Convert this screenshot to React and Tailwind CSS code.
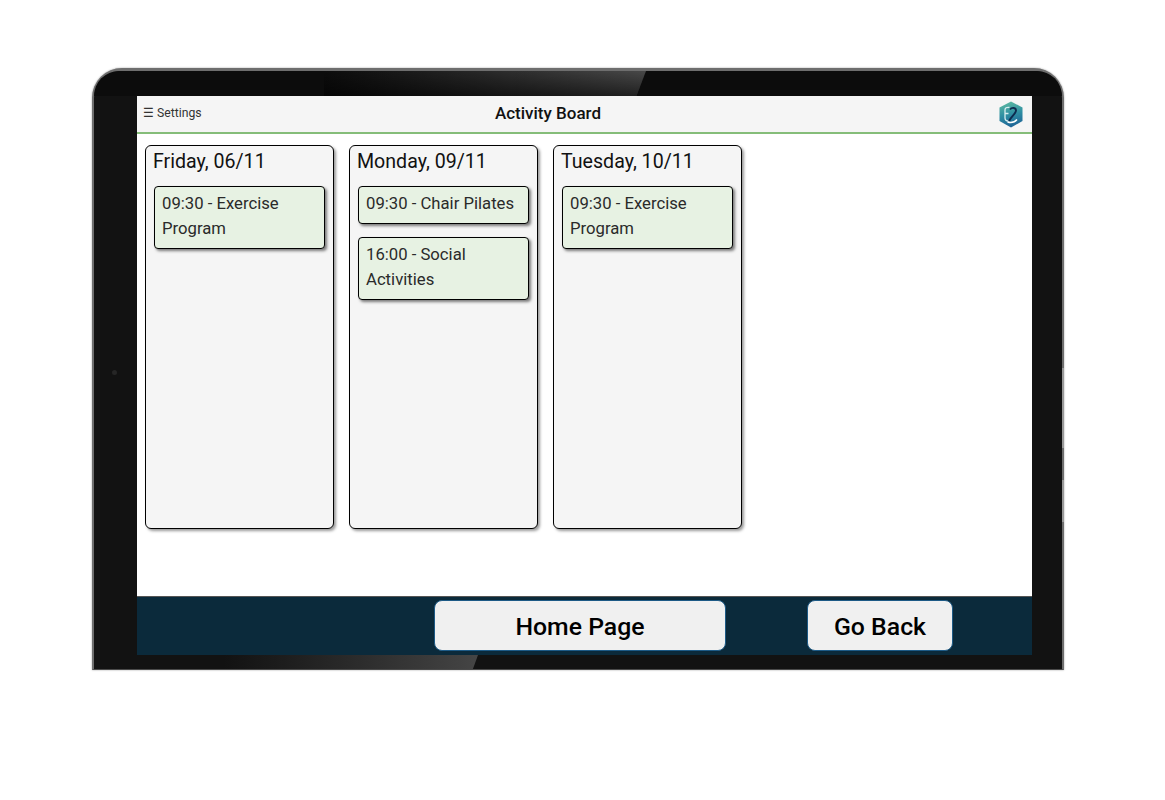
const days = [
  { title: 'Friday, 06/11', items: [['09:30 - Exercise', 'Program']] },
  { title: 'Monday, 09/11', items: [['09:30 - Chair Pilates'], ['16:00 - Social', 'Activities']] },
  { title: 'Tuesday, 10/11', items: [['09:30 - Exercise', 'Program']] },
];

function Logo() {
  return (
    <svg width="26" height="27" viewBox="0 0 26 27" className="block">
      <defs>
        <linearGradient id="hex" x1="0.3" y1="0" x2="0.5" y2="1">
          <stop offset="0" stopColor="#5cb8a0" />
          <stop offset="0.5" stopColor="#2f8fa3" />
          <stop offset="1" stopColor="#1d6296" />
        </linearGradient>
      </defs>
      <polygon points="13,0.5 24.5,6.5 24.5,20 13,26.5 1.500,20 1.500,6.500" fill="url(#hex)" />
      {/* E curve, light */}
      <path d="M11.500 6.500c-3-.5-4.500.5-4.500 2.500v8c0 2 1.500 3 3.500 3M7 12.500h3.500" fill="none" stroke="#d8eef0" strokeWidth="1.300" />
      {/* 2 curve, navy */}
      <path d="M12 8.500c2-2.500 6-2 6 1 0 3-5 6-7 10.500" fill="none" stroke="#0d2b4e" strokeWidth="1.900" />
      <path d="M9.500 21c3.500 1 7 .5 9.500-2.500" fill="none" stroke="#ffffff" strokeWidth="1.500" />
    </svg>
  );
}

function DayColumn({ day }) {
  return (
    <div className="w-[189px] h-[384px] rounded-[6px] border border-black bg-[#f5f5f5] pl-[8px] pr-[8px] shadow-[2px_2px_3px_rgba(0,0,0,0.4)]">
      <div className="-ml-[1px] pt-[1px] h-[29px] text-[19.600px] leading-[29px] text-[#111]">{day.title}</div>
      <div className="mt-[11px] flex flex-col gap-[13px]">
        {day.items.map((lines) => (
          <div
            key={lines[0]}
            className="rounded-[4px] border border-black bg-[#e7f2e3] pl-[7px] pr-[7px] pt-[4px] pb-[7px] text-[16.700px] leading-[25px] text-[#2a2a2a] shadow-[2px_2px_3px_rgba(0,0,0,0.5)]"
          >
            {lines.map((line) => (
              <div key={line}>{line}</div>
            ))}
          </div>
        ))}
      </div>
    </div>
  );
}

export default function App() {
  return (
    <div className="w-[1165px] h-[800px] bg-white pt-[68px] pl-[92px] font-['Roboto',sans-serif] overflow-hidden">
      {/* tablet frame */}
      <div className="relative w-[972px] h-[602px] rounded-t-[30px] border-x-2 border-t-[3px] border-b border-[#6e6e6e] border-b-[#4a4a4a] bg-[#121212] pt-[25px] pl-[43px] shadow-[0_0_2px_rgba(0,0,0,0.4)]">
        {/* top bezel is darker than the sides */}
        <div className="absolute left-0 top-0 w-full h-[25px] rounded-t-[28px] bg-[#0c0c0c]" />
        {/* top and bottom glare */}
        <div className="absolute left-[230px] top-0 w-[322px] h-[25px] bg-gradient-to-r from-[#0c0c0c] to-[#484848] [clip-path:polygon(0_0,100%_0,97%_100%,0_100%)]">
          <div className="w-full h-full bg-gradient-to-b from-transparent to-[rgba(0,0,0,0.55)]" />
        </div>
        <div className="absolute left-[130px] bottom-0 w-[254px] h-[14px] bg-gradient-to-r from-[#121212] to-[#454545] [clip-path:polygon(0_0,100%_0,98%_100%,0_100%)]" />
        <div className="absolute left-[18px] top-[299px] w-[5px] h-[5px] rounded-full bg-[#262626]" />

        {/* screen */}
        <div className="relative w-[895px] h-[559px] bg-white flex flex-col">
          <div className="relative h-[38px] shrink-0 flex items-center justify-between bg-[#f5f5f5] border-b-2 border-[#85bd79] pl-[6px] pr-[8px]">
            <div className="mb-[2px] text-[12.200px] text-[#333]">☰ Settings</div>
            <div className="absolute left-0 top-[5px] w-[822px] text-center text-[17px] leading-[24px] font-medium text-[#111]">Activity Board</div>
            <Logo />
          </div>

          <div className="flex-1 flex gap-[15px] pt-[11px] pl-[8px]">
            {days.map((day) => (
              <DayColumn key={day.title} day={day} />
            ))}
          </div>

          <div className="h-[59px] shrink-0 bg-[#0b2a3b] border-t border-[#555] flex items-center pl-[297px] pb-[2px]">
            <button className="w-[292px] h-[51px] pt-[3px] rounded-[8px] border border-[#1d5a86] bg-[#f0f0f0] text-[24.800px] font-medium text-black">Home Page</button>
            <button className="ml-[81px] w-[146px] h-[51px] pt-[3px] rounded-[8px] border border-[#1d5a86] bg-[#f0f0f0] text-[24.800px] font-medium text-black">Go Back</button>
          </div>
        </div>

        {/* side buttons */}
        <div className="absolute right-[-2px] top-[297px] w-[2px] h-[80px] bg-[#999]" />
        <div className="absolute right-[-2px] top-[409px] w-[2px] h-[42px] bg-[#999]" />
      </div>
    </div>
  );
}
